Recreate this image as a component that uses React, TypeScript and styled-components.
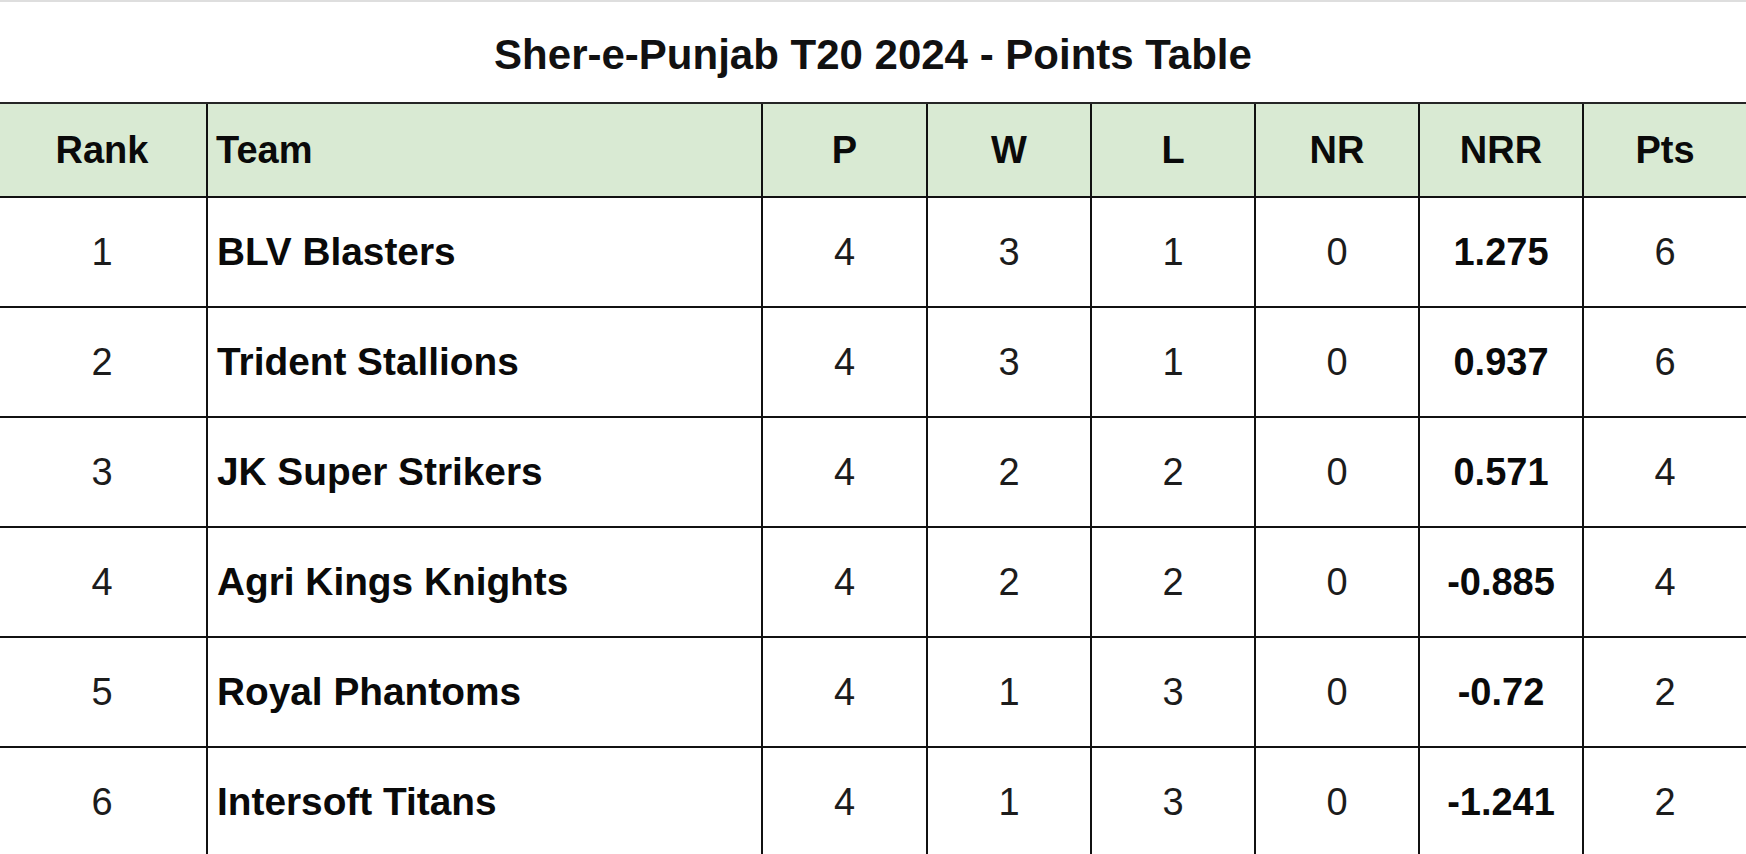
import React from "react";
import styled, { createGlobalStyle } from "styled-components";

const GlobalStyle = createGlobalStyle`
  html, body {
    margin: 0;
    padding: 0;
    background: #ffffff;
    overflow: hidden;
  }
  body {
    font-family: "Liberation Sans", Arial, Helvetica, sans-serif;
    color: #111111;
  }
`;

const Page = styled.div`
  width: 1746px;
  height: 854px;
  border-top: 2px solid #dedede;
  overflow: hidden;
  box-sizing: border-box;
`;

const Title = styled.h1`
  margin: 0;
  padding-top: 6px;
  height: 94px;
  line-height: 94px;
  text-align: center;
  font-size: 42px;
  font-weight: 700;
  color: #111111;
`;

const Table = styled.div`
  display: grid;
  grid-template-columns: 210px 555px 165px 164px 164px 164px 164px 164px;
  width: 1750px;
  margin-left: -2px;
  border-top: 2px solid #262626;
`;

const HeaderCell = styled.div<{ $align?: "left" | "center" }>`
  height: 92px;
  display: flex;
  align-items: center;
  justify-content: ${(p) => (p.$align === "left" ? "flex-start" : "center")};
  padding-left: ${(p) => (p.$align === "left" ? "8px" : "0")};
  background: #d9ead3;
  border-right: 2px solid #111111;
  border-bottom: 2px solid #111111;
  font-size: 38px;
  font-weight: 700;
  color: #0a0a0a;
  &:last-child {
    border-right: none;
  }
`;

const Cell = styled.div<{ $align?: "left" | "center"; $bold?: boolean }>`
  height: 108px;
  display: flex;
  align-items: center;
  justify-content: ${(p) => (p.$align === "left" ? "flex-start" : "center")};
  padding-left: ${(p) => (p.$align === "left" ? "9px" : "0")};
  background: #ffffff;
  border-right: 2px solid #111111;
  border-bottom: 2px solid #111111;
  font-size: ${(p) => (p.$align === "left" ? "38.8px" : "38px")};
  font-weight: ${(p) => (p.$bold ? 700 : 400)};
  color: ${(p) => (p.$bold ? "#0a0a0a" : "#1c1c1c")};
  white-space: nowrap;
`;

type Row = {
  rank: number;
  team: string;
  p: number;
  w: number;
  l: number;
  nr: number;
  nrr: string;
  pts: number;
};

const rows: Row[] = [
  { rank: 1, team: "BLV Blasters", p: 4, w: 3, l: 1, nr: 0, nrr: "1.275", pts: 6 },
  { rank: 2, team: "Trident Stallions", p: 4, w: 3, l: 1, nr: 0, nrr: "0.937", pts: 6 },
  { rank: 3, team: "JK Super Strikers", p: 4, w: 2, l: 2, nr: 0, nrr: "0.571", pts: 4 },
  { rank: 4, team: "Agri Kings Knights", p: 4, w: 2, l: 2, nr: 0, nrr: "-0.885", pts: 4 },
  { rank: 5, team: "Royal Phantoms", p: 4, w: 1, l: 3, nr: 0, nrr: "-0.72", pts: 2 },
  { rank: 6, team: "Intersoft Titans", p: 4, w: 1, l: 3, nr: 0, nrr: "-1.241", pts: 2 },
];

const headers: { label: string; align: "left" | "center" }[] = [
  { label: "Rank", align: "center" },
  { label: "Team", align: "left" },
  { label: "P", align: "center" },
  { label: "W", align: "center" },
  { label: "L", align: "center" },
  { label: "NR", align: "center" },
  { label: "NRR", align: "center" },
  { label: "Pts", align: "center" },
];

export default function App() {
  return (
    <>
      <GlobalStyle />
      <Page>
        <Title>Sher-e-Punjab T20 2024 - Points Table</Title>
        <Table>
          {headers.map((h) => (
            <HeaderCell key={h.label} $align={h.align}>
              {h.label}
            </HeaderCell>
          ))}
          {rows.map((r) => (
            <React.Fragment key={r.rank}>
              <Cell>{r.rank}</Cell>
              <Cell $align="left" $bold>
                {r.team}
              </Cell>
              <Cell>{r.p}</Cell>
              <Cell>{r.w}</Cell>
              <Cell>{r.l}</Cell>
              <Cell>{r.nr}</Cell>
              <Cell $bold>{r.nrr}</Cell>
              <Cell>{r.pts}</Cell>
            </React.Fragment>
          ))}
        </Table>
      </Page>
    </>
  );
}
